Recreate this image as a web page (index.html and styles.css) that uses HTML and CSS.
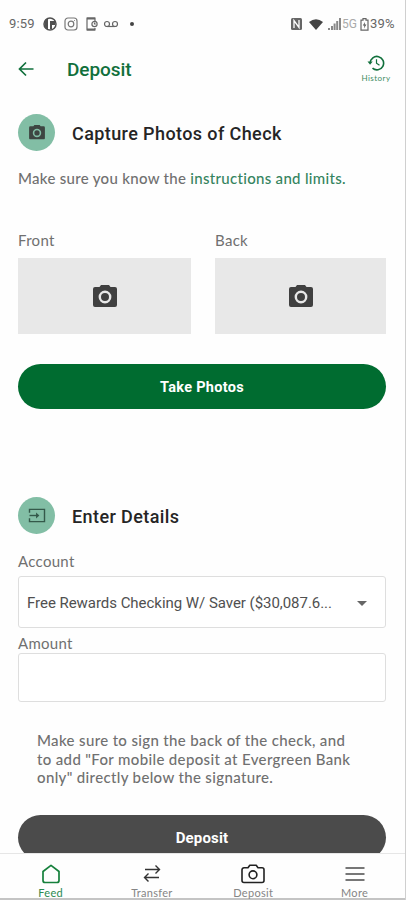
FILE: index.html
```html
<!DOCTYPE html>
<html lang="en">
<head>
<meta charset="utf-8">
<title>Deposit</title>
<link rel="stylesheet" href="styles.css">
</head>
<body>
<svg class="defs" width="0" height="0" aria-hidden="true">
  <symbol id="camera" viewBox="0 0 24 22">
    <path fill-rule="evenodd" d="M8 0h8l1.500 2H22a2 2 0 0 1 2 2v16a2 2 0 0 1-2 2H2a2 2 0 0 1-2-2V4a2 2 0 0 1 2-2h4.500zM12 5.600a6.400 6.400 0 1 0 0 12.800a6.400 6.400 0 0 0 0-12.800zm0 2.400a4 4 0 1 1 0 8a4 4 0 0 1 0-8z"/>
  </symbol>
</svg>
<div class="screen">
  <div class="status">
    <div class="status-left">
      <span class="clock">9:59</span>
      <svg width="14" height="14" viewBox="0 0 14 14"><circle cx="7" cy="7" r="6" fill="#fff" stroke="#505050" stroke-width="1.500"/><path d="M5 1.500A6 6 0 0 0 5 12.500z" fill="#505050"/><path d="M7 4h5v4H9v4H7z" fill="#505050"/></svg>
      <svg width="14" height="14" viewBox="0 0 14 14" fill="none" stroke="#777" stroke-width="1.200"><rect x="1" y="1" width="12" height="12" rx="3"/><circle cx="7" cy="7" r="2.800"/><path d="M10.200 3.500h.8"/></svg>
      <svg width="14" height="14" viewBox="0 0 14 14" fill="none" stroke="#666" stroke-width="1.200"><path d="M10 4V1H2v12h8v-2"/><path d="M2 1.500h8M2 12.500h8" stroke-width="2"/><circle cx="9.500" cy="7" r="2.600"/><path d="M9.500 5.500V7h1.300"/></svg>
      <svg class="voicemail" width="16" height="14" viewBox="0 0 16 14" fill="none" stroke="#666" stroke-width="1.200"><circle cx="4" cy="7" r="2.500"/><circle cx="12" cy="7" r="2.500"/><path d="M4 9.500h8"/></svg>
      <span class="dot"></span>
    </div>
    <div class="status-right">
      <svg width="11" height="12" viewBox="0 0 11 12"><rect width="11" height="12" rx="1.500" fill="#666"/><path d="M3 10V2.500l5 7V2" fill="none" stroke="#fff" stroke-width="1.300"/></svg>
      <svg class="wifi" width="14" height="11" viewBox="0 0 14 11"><path d="M0 3Q7-2.500 14 3L7 11z" fill="#444"/></svg>
      <svg class="signal" width="13" height="12" viewBox="0 0 13 12" fill="#888"><path d="M0 10h2v2H0zM3 8h2v4H3zM5.600 5.500h2V12h-2zM8.200 3h2v9h-2zM11 0h2v12h-2z"/></svg>
      <span class="net">5G</span>
      <svg class="battery" width="9" height="13" viewBox="0 0 9 13"><path d="M3 .7h3v1.500h2v10H1v-10h2z" fill="none" stroke="#666" stroke-width="1.200"/><path d="M5 4L2.800 7.500H4.400L4 10.500L6.400 6.500H4.700z" fill="#555"/></svg>
      <span class="percent">39%</span>
    </div>
  </div>

  <header class="header">
    <svg class="back" width="16" height="16" viewBox="0 0 16 16"><path d="M15.500 8H1.500M8 1.500L1.500 8L8 14.500" fill="none" stroke="#11703c" stroke-width="1.700"/></svg>
    <h1 class="title">Deposit</h1>
    <div class="history">
      <svg width="18" height="16" viewBox="0 0 18 16" fill="none" stroke="#11703c" stroke-width="1.600"><path d="M3.200 8A6.700 6.700 0 1 1 5.500 13.200"/><path d="M.5 6.500h5.200L3.100 9.800z" fill="#11703c" stroke="none"/><path d="M9.500 4.300V8.200L12.500 10.300" stroke-width="1.200"/></svg>
      <span>History</span>
    </div>
  </header>

  <main class="content">
    <div class="section-head">
      <span class="badge"><svg width="16" height="14.500" fill="#3d4541"><use href="#camera"/></svg></span>
      <h2>Capture Photos of Check</h2>
    </div>
    <p class="hint">Make sure you know the <a>instructions and limits.</a></p>
    <div class="photos">
      <div><div class="label">Front</div><div class="photo"><svg width="24" height="22" fill="#404040"><use href="#camera"/></svg></div></div>
      <div><div class="label">Back</div><div class="photo"><svg width="24" height="22" fill="#404040"><use href="#camera"/></svg></div></div>
    </div>
    <button class="button take">Take Photos</button>

    <div class="section-head details">
      <span class="badge"><svg width="18" height="15" viewBox="0 0 18 16" fill="none" stroke="#34594a" stroke-width="1.500"><path d="M1 5V1.500h16v13H1V11"/><path d="M1 8h8"/><path d="M8 4.800L11.500 8L8 11.200z" fill="#34594a" stroke="none"/></svg></span>
      <h2>Enter Details</h2>
    </div>
    <div class="label account">Account</div>
    <div class="field select"><span>Free Rewards Checking W/ Saver ($30,087.6...</span><i class="caret"></i></div>
    <div class="label amount">Amount</div>
    <div class="field input"></div>
    <p class="note">Make sure to sign the back of the check, and<br>to add "For mobile deposit at Evergreen Bank<br>only" directly below the signature.</p>
    <button class="button deposit">Deposit</button>
  </main>

  <nav class="nav">
    <div class="tab active">
      <svg width="20" height="20" viewBox="0 0 20 20"><path d="M2 7.500L10 1.300L18 7.500V16.500a2 2 0 0 1-2 2H4a2 2 0 0 1-2-2z" fill="none" stroke="#16803c" stroke-width="1.700" stroke-linejoin="round"/></svg>
      <span>Feed</span>
    </div>
    <div class="tab">
      <svg width="20" height="20" viewBox="0 0 20 20" fill="none" stroke="#333" stroke-width="1.400"><path d="M3 5.500h14.500M13.500 1.500L17.500 5.500L13.500 9.500M17 13.500H2.500M6.500 9.500L2.500 13.500L6.500 17.500"/></svg>
      <span>Transfer</span>
    </div>
    <div class="tab">
      <svg width="24" height="20" viewBox="0 0 24 20" fill="none" stroke="#222" stroke-width="1.600"><path d="M3 3.800h4L8.800 1.300h6.400L17 3.800h4a2 2 0 0 1 2 2V16.500a2 2 0 0 1-2 2H3a2 2 0 0 1-2-2V5.800a2 2 0 0 1 2-2z" stroke-linejoin="round"/><circle cx="12" cy="10.800" r="3.900"/></svg>
      <span>Deposit</span>
    </div>
    <div class="tab">
      <svg width="20" height="20" viewBox="0 0 20 20" stroke="#777" stroke-width="2"><path d="M.5 4h19M.5 10h19M.5 16h19"/></svg>
      <span>More</span>
    </div>
  </nav>
</div>
</body>
</html>
```
FILE: styles.css
```css
* { box-sizing: border-box; }
body { margin: 0; background: #fff; }
h1, h2, p { margin: 0; font-weight: 500; }
svg { display: block; flex: none; }
.defs { position: absolute; }
.screen {
  width: 406px; height: 900px; overflow: hidden;
  display: flex; flex-direction: column;
  background: #fefefe; border-right: 1px solid #cfcfcf;
  font-family: Lato, "Open Sans", sans-serif; color: #707070;
  white-space: nowrap;
}
.status {
  height: 48px; flex: none; padding: 0 9px;
  display: flex; justify-content: space-between; align-items: center;
  font: 400 13px/16px Roboto, sans-serif; color: #666;
}
.status-left, .status-right { display: flex; align-items: center; }
.status-left { gap: 7px; }
.clock { width: 27px; letter-spacing: .2px; }
.voicemail { margin-left: -3px; }
.dot { width: 4px; height: 4px; margin-left: 4px; border-radius: 50%; background: #444; }
.wifi { margin-left: 7px; }
.signal { margin-left: 5px; }
.net { margin-left: 1px; width: 16px; color: #aaa; font-size: 12px; }
.battery { margin-left: 2px; }
.percent { letter-spacing: .2px; width: 26px; margin-left: 1px; }

.header { height: 42px; flex: none; display: flex; align-items: center; padding: 0 14px 0 18px; }
.title { margin-left: 33px; padding-top: 1px; flex: 1; font: 500 19px/24px Roboto, sans-serif; color: #11703c; letter-spacing: -.05px; }
.history { width: 30px; display: flex; flex-direction: column; align-items: center; color: #3c8b62; font-size: 8px; line-height: 10px; letter-spacing: .45px; gap: 2px; }

.content { flex: 1; min-height: 0; overflow: hidden; padding: 24px 19px 0 18px; }
.section-head { height: 37px; display: flex; align-items: center; gap: 17px; }
.section-head h2 { font: 500 18px/24px Roboto, sans-serif; letter-spacing: .4px; color: #252525; padding-top: 3px; }
.badge { width: 37px; height: 37px; border-radius: 50%; background: #82bea5; display: flex; align-items: center; justify-content: center; }
.hint { margin-top: 17px; font-size: 15px; line-height: 20px; letter-spacing: .3px; }
.hint a { color: #35845f; }
.label { font-size: 15px; line-height: 20px; letter-spacing: .3px; }
.photos { margin-top: 42px; display: grid; grid-template-columns: 173px 171px; gap: 24px; }
.photo { height: 76px; margin-top: 8px; background: #e8e8e8; display: flex; align-items: center; justify-content: center; }
.button { display: block; width: 100%; height: 45px; padding: 0; border: 0; border-radius: 23px; color: #fff; font: 700 14.500px/20px Roboto, sans-serif; }
.take { margin-top: 30px; padding-top: 2px; background: #006c30; letter-spacing: .3px; }
.details { margin-top: 88px; }
.account { margin-top: 17px; }
.field { border: 1px solid #dedede; border-radius: 3px; background: #fff; }
.select { height: 52px; margin-top: 5px; padding: 2px 18px 0 8px; display: flex; align-items: center; justify-content: space-between; font: 400 15px/20px Roboto, sans-serif; letter-spacing: -.04px; color: #505050; }
.caret { border: 5px solid transparent; border-top-color: #666; border-bottom: 0; }
.amount { margin-top: 5px; }
.input { height: 49px; }
.note { margin: 29px 0 0 19px; font-size: 15px; line-height: 18.700px; letter-spacing: .35px; }
.deposit { margin-top: 28px; background: #4b4b4b; font-size: 15px; letter-spacing: .15px; }

.nav { height: 47px; flex: none; border-top: 1px solid #e6e6e6; border-bottom: 2px solid #c4c4c4; display: grid; grid-template-columns: repeat(4, 101.300px); }
.tab { display: flex; flex-direction: column; align-items: center; padding-top: 10px; font-size: 11px; line-height: 12px; letter-spacing: .3px; gap: 3px; color: #858585; }
.active { color: #2b8a50; }
```
